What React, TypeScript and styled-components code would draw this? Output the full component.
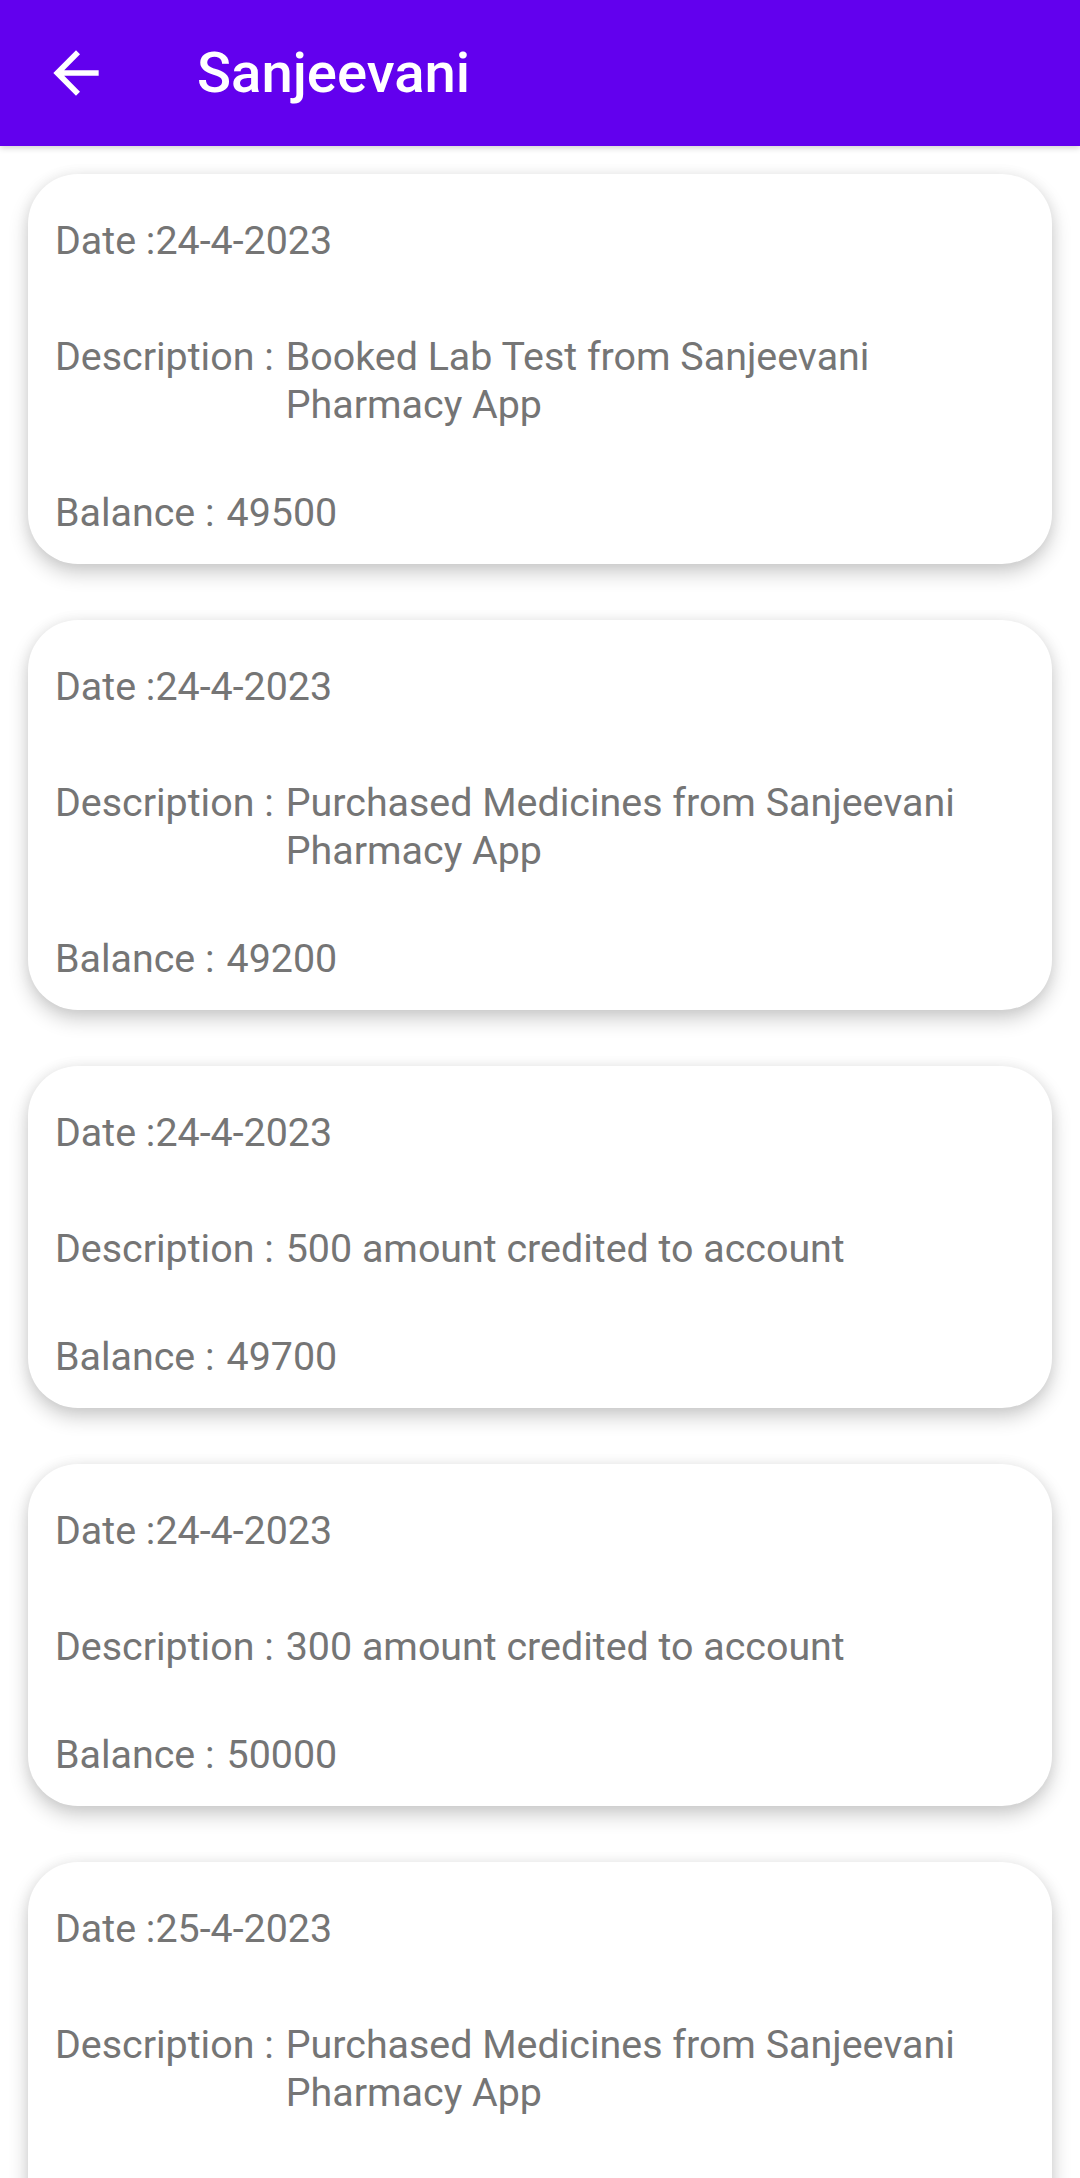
import React from "react";
import styled, { createGlobalStyle } from "styled-components";

// === THEME ===
const colors = {
  primary: "#6200EE",
  onPrimary: "#FFFFFF",
  text: "#757575",
  card: "#FFFFFF",
  page: "#FFFFFF",
};

// === DATA ===
const transactions = [
  { date: "24-4-2023", description: "Booked Lab Test from Sanjeevani Pharmacy App", balance: "49500" },
  { date: "24-4-2023", description: "Purchased Medicines from Sanjeevani Pharmacy App", balance: "49200" },
  { date: "24-4-2023", description: "500 amount credited to account", balance: "49700" },
  { date: "24-4-2023", description: "300 amount credited to account", balance: "50000" },
  { date: "25-4-2023", description: "Purchased Medicines from Sanjeevani Pharmacy App", balance: "49700" },
];

const GlobalStyle = createGlobalStyle`
  body {
    margin: 0;
    background: ${colors.page};
    font-family: Roboto, "Noto Sans", Arial, sans-serif;
  }
`;

// === APP BAR ===
const AppBar = styled.header`
  position: relative;
  z-index: 2;
  display: flex;
  align-items: center;
  height: 146px;
  background: ${colors.primary};
  box-shadow: 0 2px 6px rgba(0, 0, 0, 0.18);
`;

const BackButton = styled.button`
  display: flex;
  align-items: center;
  justify-content: center;
  width: 68px;
  height: 68px;
  margin-left: 42px;
  padding: 0;
  border: none;
  background: transparent;
  cursor: pointer;

  svg {
    width: 68px;
    height: 68px;
    fill: ${colors.onPrimary};
  }
`;

const Title = styled.h1`
  margin: 0 0 0 87px;
  font-family: Roboto, sans-serif;
  font-size: 56.25px;
  font-weight: 500;
  color: ${colors.onPrimary};
  letter-spacing: 0;
`;

// === LIST ===
const List = styled.main`
  display: flex;
  flex-direction: column;
`;

const Item = styled.div`
  padding: 28px;
  overflow: hidden;
`;

const Card = styled.div`
  display: flex;
  flex-direction: column;
  padding: 43px 28px 27px 27px;
  background: ${colors.card};
  border-radius: 50px;
  box-shadow: 0 9px 20px rgba(0, 0, 0, 0.2), 0 0 14px rgba(0, 0, 0, 0.06);
`;

const Line = styled.div<{ $gap?: number }>`
  display: flex;
  gap: 12px;
  margin-top: ${(p) => p.$gap ?? 0}px;
  font-size: 39.4px;
  line-height: 48px;
  color: ${colors.text};
`;

const Label = styled.span`
  flex: none;
`;

const Value = styled.span`
  flex: 1;
  min-width: 0;
`;

const ArrowBack = () => (
  <svg viewBox="0 0 24 24">
    <path d="M20 11H7.83l5.59-5.59L12 4l-8 8 8 8 1.41-1.41L7.83 13H20v-2z" />
  </svg>
);

export default function App() {
  return (
    <>
      <GlobalStyle />
      <AppBar>
        <BackButton aria-label="Back">
          <ArrowBack />
        </BackButton>
        <Title>Sanjeevani</Title>
      </AppBar>
      <List>
        {transactions.map((t, i) => (
          <Item key={i}>
            <Card>
              <Line>Date :{t.date}</Line>
              <Line $gap={68}>
                <Label>Description :</Label>
                <Value>{t.description}</Value>
              </Line>
              <Line $gap={60}>
                <Label>Balance :</Label>
                <Value>{t.balance}</Value>
              </Line>
            </Card>
          </Item>
        ))}
      </List>
    </>
  );
}
